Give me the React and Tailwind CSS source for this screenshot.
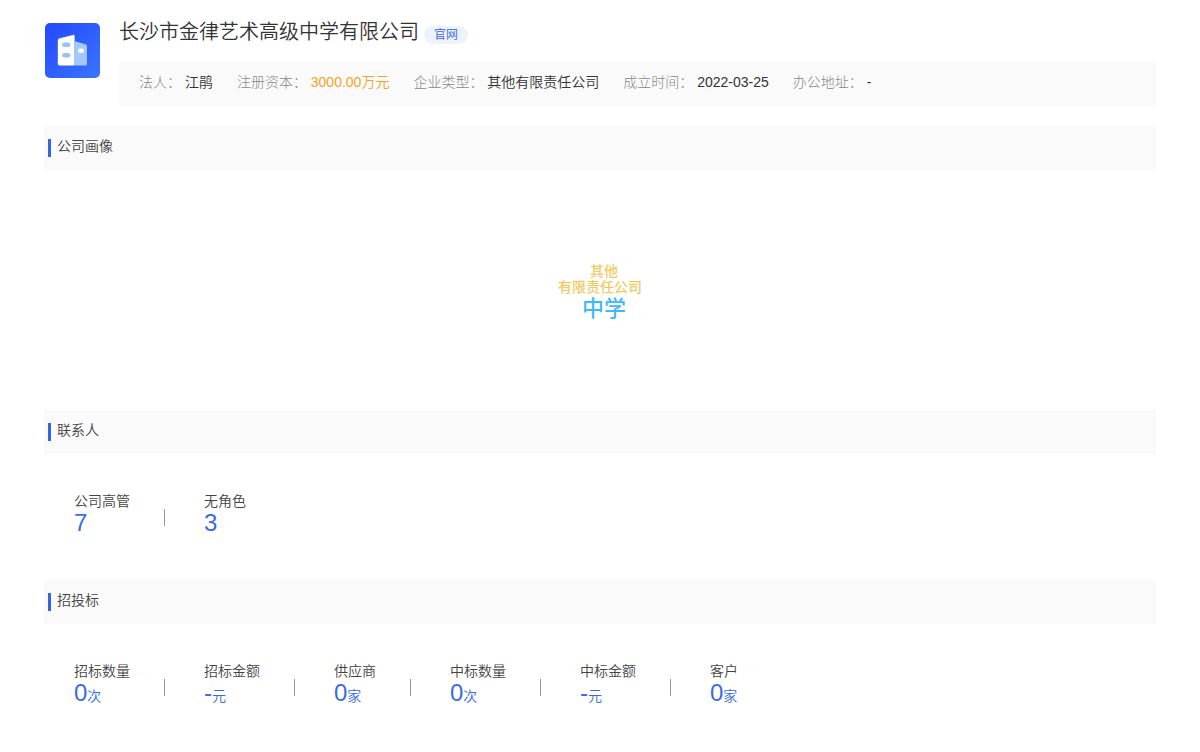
const companyInfo = [
  { label: "法人", value: "江鹃" },
  { label: "注册资本", value: "3000.00万元", highlight: true },
  { label: "企业类型", value: "其他有限责任公司" },
  { label: "成立时间", value: "2022-03-25" },
  { label: "办公地址", value: "-" },
];

const contacts = [
  { label: "公司高管", value: "7" },
  { label: "无角色", value: "3" },
];

const bids = [
  { label: "招标数量", value: "0", unit: "次" },
  { label: "招标金额", value: "-", unit: "元" },
  { label: "供应商", value: "0", unit: "家" },
  { label: "中标数量", value: "0", unit: "次" },
  { label: "中标金额", value: "-", unit: "元" },
  { label: "客户", value: "0", unit: "家" },
];

function CompanyLogo() {
  return (
    <svg viewBox="0 0 55 55" className="w-[55px] h-[55px] shrink-0" aria-hidden="true">
      <defs>
        <linearGradient id="logoBg" x1="0" y1="0" x2="1" y2="1">
          <stop offset="0" stopColor="#2448fb" />
          <stop offset="1" stopColor="#3a74ff" />
        </linearGradient>
      </defs>
      <rect width="55" height="55" rx="5" fill="url(#logoBg)" />
      <path d="M30 18.2 40.5 21.3Q42 21.8 42 23.3V41Q42 42.5 40.5 42.5H30Z" fill="#a3c8fb" />
      <path d="M14.8 15.2 28 11.9Q29.6 11.6 29.6 13.2V42.5H14.5Q12.8 42.5 12.8 40.8V17.6Q12.8 15.7 14.8 15.2Z" fill="#fff" />
      <rect x="17" y="19.5" width="8.5" height="4.6" rx="2.3" fill="#9fc0f6" />
      <rect x="17" y="30" width="8.5" height="4.6" rx="2.3" fill="#9fc0f6" />
      <rect x="33" y="25.5" width="6" height="4.6" rx="2.3" fill="#fff" />
    </svg>
  );
}

function SectionTitle({ children }) {
  return (
    <div className="flex h-11 items-start bg-[#fafafa] pl-1">
      <span className="mt-[13px] h-[18px] w-[3px] bg-[#3366e6]" />
      <h2 className="ml-1.5 mt-2.5 text-sm text-[#444]">{children}</h2>
    </div>
  );
}

function StatList({ items }) {
  return (
    <dl className="flex flex-wrap px-[30px] pt-[37px] pb-[45px]">
      {items.map((item, index) => (
        <div key={item.label} className="flex">
          {index > 0 && <span className="ml-[34px] mr-[39px] mt-[18px] h-[17px] w-px bg-[#999]" />}
          <div>
            <dt className="text-sm text-[#444]">{item.label}</dt>
            <dd className="text-2xl leading-6 text-[#3a6aea]">
              {item.value}
              {item.unit && <span className="text-sm leading-5">{item.unit}</span>}
            </dd>
          </div>
        </div>
      ))}
    </dl>
  );
}

export default function App() {
  return (
    <main
      lang="zh-CN"
      className="bg-white px-11 pt-[18px] font-[350] font-['Liberation_Sans','Noto_Sans_CJK_SC',sans-serif]"
    >
      <header className="flex gap-5 pl-px">
        <div className="pt-[5px]">
          <CompanyLogo />
        </div>
        <div className="-ml-px min-w-0 flex-1">
          <div className="flex items-start gap-[5px]">
            <h1 className="text-xl leading-7 font-[350] text-[#333]">长沙市金律艺术高级中学有限公司</h1>
            <a
              href="#website"
              className="mt-2 h-[18px] rounded-full bg-[#eef2fc] px-2.5 text-xs leading-[18px] text-[#3366e6]"
            >
              官网
            </a>
          </div>
          <div className="mt-4 flex min-h-11 flex-wrap gap-x-6 bg-[#fafafa] px-5 pt-2.5 text-sm">
            {companyInfo.map((item) => (
              <p key={item.label} className="text-[#333]">
                <span className="font-light text-[#888]">{item.label}：</span>{" "}
                <span className={item.highlight ? "text-[#f0a42a]" : ""}>{item.value}</span>
              </p>
            ))}
          </div>
        </div>
      </header>

      <section className="mt-5">
        <SectionTitle>公司画像</SectionTitle>
        <div className="flex h-60 flex-col items-center justify-center pt-1.5 font-medium">
          <span className="pl-2 text-sm leading-4 text-[#f3c95f]">其他</span>
          <span className="text-sm leading-4 text-[#f3c95f]">有限责任公司</span>
          <span className="pl-2 text-[22px] leading-7 text-[#41b8fa]">中学</span>
        </div>
      </section>

      <section>
        <SectionTitle>联系人</SectionTitle>
        <StatList items={contacts} />
      </section>

      <section>
        <SectionTitle>招投标</SectionTitle>
        <StatList items={bids} />
      </section>
    </main>
  );
}
